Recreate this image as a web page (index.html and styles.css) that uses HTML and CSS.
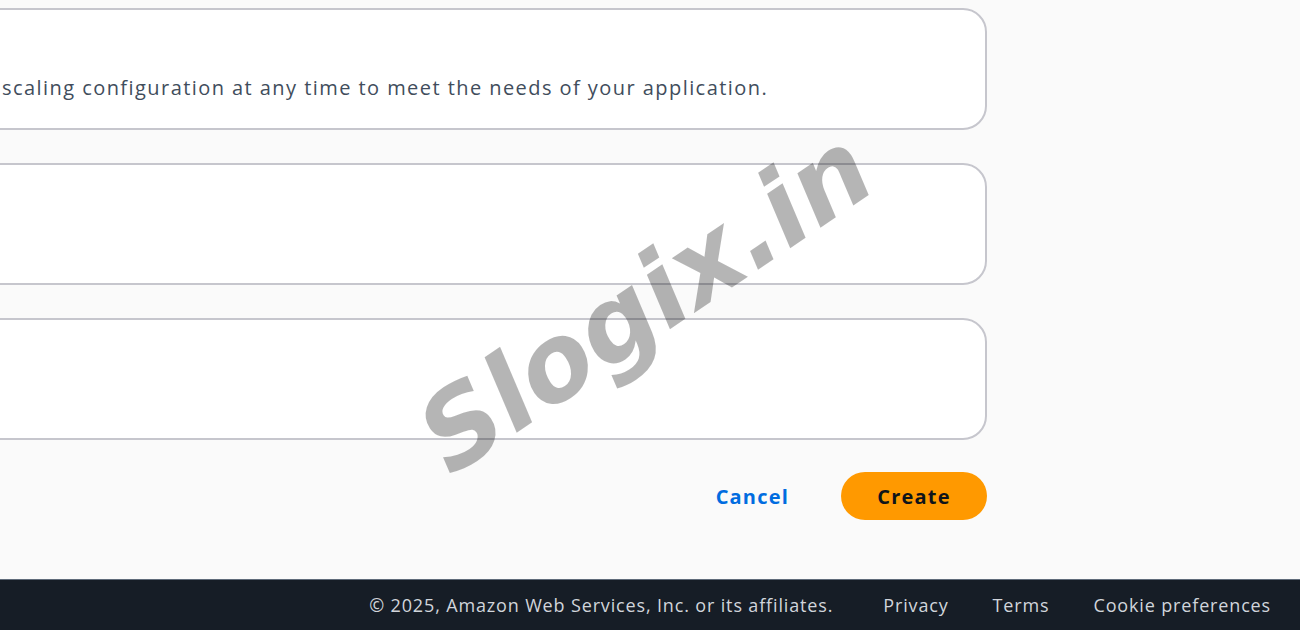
FILE: index.html
```html
<!DOCTYPE html>
<html lang="en">
<head>
<meta charset="utf-8">
<title>Create</title>
<link rel="stylesheet" href="styles.css">
</head>
<body>
<div class="page">
  <main class="content">
    <section class="card card-first">
      <p class="desc">scaling configuration at any time to meet the needs of your application.</p>
    </section>
    <section class="card"></section>
    <section class="card"></section>
    <div class="actions">
      <button class="btn-link" type="button">Cancel</button>
      <button class="btn-primary" type="button">Create</button>
    </div>
  </main>
  <footer class="footer">
    <span class="copy">© 2025, Amazon Web Services, Inc. or its affiliates.</span>
    <a class="flink">Privacy</a>
    <a class="flink">Terms</a>
    <a class="flink">Cookie preferences</a>
  </footer>
</div>
<div class="watermark">Slogix.in</div>
</body>
</html>
```

FILE: styles.css
```css
* { box-sizing: border-box; }
html, body { margin: 0; padding: 0; }
body {
  background: #fafafa;
  font-family: "Open Sans", "Noto Sans", sans-serif;
  color: #0f141a;
  overflow: hidden;
  width: 1300px;
  height: 630px;
}
.page {
  display: flex;
  flex-direction: column;
  height: 630px;
}
.content {
  width: 1020px;
  margin-left: -33px;
  padding-top: 8px;
  display: flex;
  flex-direction: column;
  gap: 33px;
}
.card {
  height: 122px;
  background: #ffffff;
  border: 2px solid #c6c6cd;
  border-radius: 24px;
  padding-left: 33px;
}
.card-first {
  display: flex;
  align-items: flex-end;
  padding-bottom: 28px;
}
.desc {
  margin: 0;
  font-size: 20px;
  font-weight: 500;
  letter-spacing: 1.44px;
  line-height: 24px;
  color: #414d5c;
}
.actions {
  display: flex;
  justify-content: flex-end;
  align-items: center;
  gap: 52px;
  margin-top: -1px;
}
.btn-link {
  background: none;
  border: 0;
  padding: 0;
  font-family: inherit;
  font-size: 20px;
  font-weight: 700;
  letter-spacing: 1.2px;
  color: #006ce0;
}
.btn-primary {
  width: 146px;
  height: 48px;
  border: 0;
  border-radius: 24px;
  background: #ff9900;
  font-family: inherit;
  font-size: 20px;
  font-weight: 700;
  letter-spacing: 1.2px;
  color: #0f141a;
}
.footer {
  margin-top: auto;
  height: 51px;
  background: #161d26;
  border-top: 1px solid #5f6b7a;
  display: flex;
  justify-content: flex-end;
  align-items: center;
  padding-right: 29px;
  gap: 44px;
  font-size: 18px;
  font-weight: 500;
  letter-spacing: 0.85px;
  color: #d1d5db;
}
.copy { margin-right: 6px; }
.flink { color: #d1d5db; }
.watermark {
  position: absolute;
  left: 645px;
  top: 302px;
  transform: translate(-50%, -50%) rotate(-34deg);
  font-family: "DejaVu Sans", sans-serif;
  font-weight: 700;
  font-style: italic;
  font-size: 106px;
  color: rgba(0, 0, 0, 0.29);
  white-space: nowrap;
  pointer-events: none;
}
```
